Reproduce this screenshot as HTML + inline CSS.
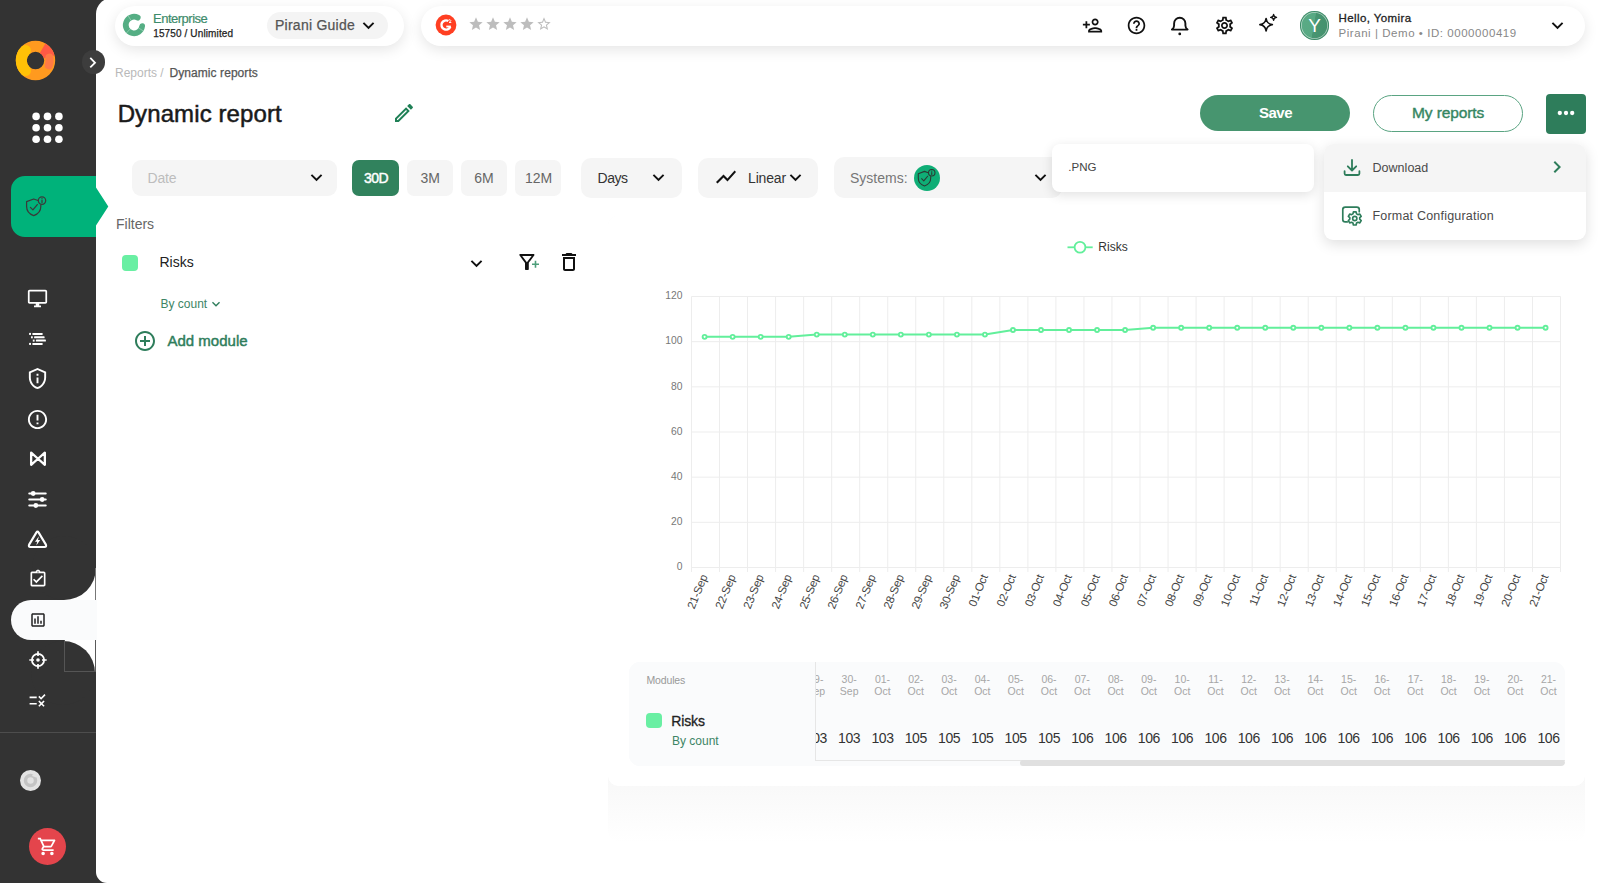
<!DOCTYPE html>
<html lang="en">
<head>
<meta charset="utf-8">
<title>Dynamic report</title>
<style>
*{box-sizing:border-box;margin:0;padding:0}
html,body{width:1600px;height:883px;overflow:hidden;background:#333;font-family:"Liberation Sans",sans-serif;color:#222}
.abs,.t{position:absolute}
.t{white-space:nowrap;line-height:1}
svg{position:absolute;display:block;overflow:visible}
#side{position:absolute;left:0;top:0;width:96px;height:883px;background:#333}
#main{position:absolute;left:96px;top:-2px;width:1504px;height:885px;background:#fff;border-radius:16px 0 0 11px}
.pill{position:absolute;background:#fff;border-radius:20px;box-shadow:0 4px 14px rgba(0,0,0,.10)}
.sel{position:absolute;background:#f5f5f5;border-radius:10px}
.btn{position:absolute;background:#f5f5f5;border-radius:7px}
</style>
</head>
<body>
<!-- SIDEBAR -->
<div id="side"></div>
<!-- MAIN -->
<div id="main"></div>
<!--SIDEBAR-CONTENT-->
<!-- sidebar content -->
<svg style="left:15px;top:40px" width="41" height="41" viewBox="-20.5 -20.5 41 41">
  <circle r="14.2" fill="none" stroke="#ff9a1f" stroke-width="11"/>
  <path d="M-10.0 -10.1 A14.2 14.2 0 0 0 -10.0 10.1" fill="none" stroke="#ffc107" stroke-width="11" stroke-linecap="round"/>
  <path d="M7.100 -12.300A14.200 14.200 0 0 1 13.720 -3.680" fill="none" stroke="#ff5a45" stroke-width="11"/>
  <path d="M13.900 -2.900A14.200 14.200 0 0 1 13.340 4.860" fill="none" stroke="#ff7a45" stroke-width="8" stroke-linecap="round"/>
</svg>
<div class="abs" style="left:81.500px;top:50.300px;width:23.800px;height:23.800px;border-radius:12px;background:#3d3d3d"></div>
<svg style="left:82.200px;top:51.700px" width="21.400" height="21.400" viewBox="0 0 24 24"><path fill="#fff" d="M10 6L8.59 7.41 13.17 12l-4.58 4.59L10 18l6-6z"/></svg>
<svg style="left:30px;top:110px" width="36" height="36" viewBox="0 0 36 36" fill="#fff">
  <circle cx="6.1" cy="6.4" r="3.8"/><circle cx="17.5" cy="6.4" r="3.8"/><circle cx="28.9" cy="6.4" r="3.8"/>
  <circle cx="6.1" cy="17.8" r="3.8"/><circle cx="17.5" cy="17.8" r="3.8"/><circle cx="28.9" cy="17.8" r="3.8"/>
  <circle cx="6.1" cy="29.2" r="3.8"/><circle cx="17.5" cy="29.2" r="3.8"/><circle cx="28.9" cy="29.2" r="3.8"/>
</svg>
<!-- green system tab -->
<svg style="left:11px;top:176px" width="98" height="61" viewBox="0 0 98 61"><path fill="#00b27a" d="M14 0H85V11.5L97.3 30.5 85 49.5V61H14A14 14 0 0 1 0 47V14A14 14 0 0 1 14 0Z"/></svg>
<svg style="left:24px;top:194px" width="24" height="24" viewBox="0 0 24 24" fill="none" stroke="#3a3a3a" stroke-width="1.25" stroke-linecap="round" stroke-linejoin="round">
  <path d="M14 6.5 9.7 5 2.6 7.6V12.6C2.6 17 5.6 20.3 9.7 21.7 13.8 20.3 16.8 17 16.8 12.6V11"/>
  <path d="M6.4 13.4 8.9 15.9 13.3 10.6"/>
  <circle cx="18" cy="6.6" r="3.7"/>
  <path d="M18 6.3V8.6M18 4.7V4.8"/>
</svg>
<!-- active tab -->
<div class="abs" style="left:64px;top:568px;width:32px;height:32px;background:#fff"></div>
<div class="abs" style="left:32px;top:536px;width:64px;height:64px;border-radius:32px;background:#333"></div>
<div class="abs" style="left:95px;top:568px;width:1px;height:32px;background:#777"></div>
<div class="abs" style="left:64px;top:640px;width:32px;height:32px;background:#fff;border:1px solid #5a5a5a;border-top:0"></div>
<div class="abs" style="left:31px;top:641px;width:64px;height:64px;border-radius:32px;background:#333"></div>
<div class="abs" style="left:64px;top:640px;width:1px;height:32px;background:#555"></div>
<div class="abs" style="left:64px;top:671px;width:32px;height:1px;background:#555"></div>
<div class="abs" style="left:11px;top:600px;width:86px;height:40px;border-radius:20px 0 0 20px;background:#fafbfc"></div>
<!-- nav icons -->
<svg style="left:27px;top:288px" width="21" height="21" viewBox="0 0 24 24"><path fill="#fff" d="M21 2H3c-1.1 0-2 .9-2 2v12c0 1.1.9 2 2 2h7v2H8v2h8v-2h-2v-2h7c1.100 0 2-.9 2-2V4c0-1.100-.9-2-2-2zm0 14H3V4h18v12z"/></svg>
<svg style="left:28px;top:331px" width="20" height="16" viewBox="0 0 20 16" fill="#fff"><rect x="1.100" y="1.900" width="1.900" height="2"/><rect x="4.300" y="1.900" width="10.400" height="2" rx=".6"/><rect x="3" y="5.300" width="1.800" height="2"/><rect x="6.100" y="5.300" width="10.500" height="2" rx=".6"/><rect x="4.800" y="8.600" width="1.800" height="2"/><rect x="7.900" y="8.600" width="10" height="2" rx=".6"/><rect x="1.100" y="11.900" width="1.900" height="2"/><rect x="4.300" y="11.900" width="10.400" height="2" rx=".6"/></svg>
<svg style="left:26px;top:366.500px" width="23" height="23" viewBox="0 0 24 24"><path fill="#fff" d="M12 3.190l7 3.110V11c0 4.520-2.980 8.690-7 9.930-4.020-1.240-7-5.410-7-9.930V6.300l7-3.110M12 1L3 5v6c0 5.550 3.840 10.740 9 12 5.160-1.260 9-6.450 9-12V5l-9-4zm-1 6h2v2h-2V7zm0 4h2v6h-2v-6z"/></svg>
<svg style="left:26px;top:407.500px" width="23" height="23" viewBox="0 0 24 24"><path fill="#fff" d="M11 15h2v2h-2zm0-8h2v6h-2zm.99-5C6.470 2 2 6.480 2 12s4.470 10 9.990 10C17.520 22 22 17.520 22 12S17.520 2 11.990 2zM12 20c-4.420 0-8-3.580-8-8s3.580-8 8-8 8 3.580 8 8-3.580 8-8 8z"/></svg>
<svg style="left:28.500px;top:450px" width="18" height="17.500" viewBox="0 0 21 21" preserveAspectRatio="none"><path fill="none" stroke="#fff" stroke-width="2.700" stroke-linejoin="round" d="M2.500 3.200 10.500 10.500 18.500 3.200V17.800L10.500 10.500 2.500 17.800Z"/></svg>
<svg style="left:27px;top:489px" width="21" height="21" viewBox="0 0 21 21" fill="none" stroke="#fff" stroke-width="2.100" stroke-linecap="round"><path d="M2.300 4.500H18.700M2.300 10.500H18.700M2.300 16.500H18.700"/><circle cx="6.200" cy="4.500" r="2.400" fill="#fff" stroke="none"/><circle cx="15.200" cy="10.500" r="2.400" fill="#fff" stroke="none"/><circle cx="8.800" cy="16.500" r="2.400" fill="#fff" stroke="none"/></svg>
<svg style="left:27px;top:529px" width="21" height="21" viewBox="0 0 21 21"><path fill="none" stroke="#fff" stroke-width="2.100" stroke-linejoin="round" d="M9.300 3.600Q10.500 1.700 11.700 3.600L18.900 15.600Q19.800 17.900 17.500 18H3.500Q1.200 17.900 2.100 15.600Z"/><path fill="#fff" d="M11.900 7.200 8 12.800H10.200L9.300 16.600 13.200 10.900H11Z"/></svg>
<svg style="left:27.500px;top:569px" width="20" height="20" viewBox="0 0 24 24"><path fill="#fff" d="M18 9l-1.400-1.400-6.600 6.600-2.600-2.600L6 13l4 4zm1-6h-4.180C14.400 1.840 13.300 1 12 1c-1.300 0-2.400.840-2.820 2H5c-.14 0-.27.010-.4.040-.39.080-.74.280-1.010.55-.18.180-.33.400-.43.640-.1.230-.16.490-.16.770v14c0 .27.060.54.160.78s.25.450.43.640c.27.270.62.470 1.010.55.130.020.260.030.400.030h14c1.100 0 2-.9 2-2V5c0-1.100-.9-2-2-2zm-7-.25c.41 0 .75.340.75.750s-.34.750-.75.750-.75-.34-.75-.75.340-.75.750-.750zM19 19H5V5h14v14z"/></svg>
<svg style="left:28.650px;top:610.950px" width="18" height="18" viewBox="0 0 24 24"><path fill="#222" d="M19 3H5c-1.100 0-2 .9-2 2v14c0 1.100.9 2 2 2h14c1.100 0 2-.9 2-2V5c0-1.100-.9-2-2-2zm0 16H5V5h14v14zM7 10h2v7H7zm4-3h2v10h-2zm4 6h2v4h-2z"/></svg>
<svg style="left:28.200px;top:649.600px" width="20" height="20" viewBox="-10 -10 20 20" fill="none" stroke="#fff" stroke-width="1.800"><circle r="6.100"/><path d="M0 -8.700V-4M0 8.700V4M-8.700 0H-4M8.700 0H4" stroke-width="1.700"/><circle r="1.800" fill="#fff" stroke="none"/></svg>
<svg style="left:28.400px;top:690.600px" width="19" height="19" viewBox="0 0 24 24"><path fill="#fff" d="M16.540 11L13 7.460l1.410-1.410 2.120 2.120 4.240-4.240 1.410 1.410L16.540 11zM11 7H2v2h9V7zm10 6.410L19.590 12 17 14.590 14.410 12 13 13.410 15.590 16 13 18.590 14.410 20 17 17.410 19.590 20 21 18.590 18.410 16 21 13.410zM11 15H2v2h9v-2z"/></svg>
<div class="abs" style="left:0;top:732px;width:96px;height:1px;background:#4d4d4d"></div>
<div class="abs" style="left:20px;top:770px;width:21px;height:21px;border-radius:11px;background:#e3e3e3"></div>
<svg style="left:20px;top:770px" width="21" height="21" viewBox="-10.500 -10.500 21 21"><circle r="5" fill="none" stroke="#c4c4c4" stroke-width="3.500"/><path d="M2-5.500 6-4" stroke="#e3e3e3" stroke-width="2"/></svg>
<div class="abs" style="left:29px;top:828px;width:37px;height:37px;border-radius:19px;background:#e4454c"></div>
<svg style="left:37px;top:836px" width="21" height="21" viewBox="0 0 24 24"><path fill="#fff" d="M15.550 13c.75 0 1.410-.41 1.750-1.030l3.580-6.490c.37-.66-.11-1.480-.87-1.480H5.210l-.94-2H1v2h2l3.600 7.590-1.350 2.440C4.520 15.370 5.480 17 7 17h12v-2H7l1.100-2h7.450zM6.160 6h12.150l-2.760 5H8.530L6.160 6zM7 18c-1.100 0-1.990.9-1.990 2S5.900 22 7 22s2-.9 2-2-.9-2-2-2zm10 0c-1.100 0-1.990.9-1.990 2s.89 2 1.990 2 2-.9 2-2-.9-2-2-2z"/></svg>
<!--/SIDEBAR-CONTENT-->
<!--TOPBAR-->
<!-- top bar -->
<div class="pill" style="left:115px;top:5.500px;width:289px;height:40px"></div>
<svg style="left:122.900px;top:14.200px" width="22" height="22" viewBox="-11 -11 22 22" fill="none" stroke="#55ae84" stroke-width="5.700" stroke-linecap="round">
  <path d="M3.750 -7.350A8.250 8.250 0 1 0 8.190 1"/>
  <path d="M-3 -4.700-6 -9.400M-3.800 4-7.800 8.200M4.700 3 9.400 6" stroke="#bfe3d2" stroke-width=".5" stroke-linecap="butt"/>
</svg>
<div class="t" id="t_ent" style="left:153px;top:12.200px;font-size:13px;color:#3d8b6b;-webkit-text-stroke:.2px #3d8b6b;letter-spacing:-.5px">Enterprise</div>
<div class="t" id="t_unl" style="left:153.200px;top:28.700px;font-size:10px;color:#222;-webkit-text-stroke:.25px #222;letter-spacing:.13px">15750 / Unlimited</div>
<div class="abs" style="left:267px;top:12.300px;width:121px;height:26.400px;border-radius:14px;background:#f4f4f4"></div>
<div class="t" id="t_pg" style="left:275px;top:18px;font-size:14px;color:#555;letter-spacing:.25px;-webkit-text-stroke:.25px #555">Pirani Guide</div>
<svg style="left:356.800px;top:14.200px" width="23" height="23" viewBox="0 0 24 24"><path fill="#111" d="M16.590 8.590L12 13.170 7.410 8.590 6 10l6 6 6-6z"/></svg>
<div class="pill" style="left:420.700px;top:5.500px;width:1164.600px;height:40px"></div>
<svg style="left:434.500px;top:14.200px" width="22" height="22" viewBox="-11 -11 22 22"><circle r="10.400" fill="#ff3f22"/><path d="M2.300 -4A4.600 4.600 0 1 0 4.300 1.700" fill="none" stroke="#fff" stroke-width="2.400"/><path d="M0.300 1.500H4.900" stroke="#fff" stroke-width="1.800"/><path d="M2.600 -4.900Q4.400 -6 4.800 -4.600 4.800 -3.400 3 -2.500H5.300" fill="none" stroke="#fff" stroke-width=".9"/></svg>
<svg style="left:467.500px;top:16.300px" width="16" height="16" viewBox="0 0 24 24"><path fill="#bdbdbd" d="M12 17.270L18.180 21l-1.640-7.030L22 9.240l-7.190-.61L12 2 9.190 8.630 2 9.240l5.460 4.730L5.820 21z"/></svg>
<svg style="left:484.550px;top:16.300px" width="16" height="16" viewBox="0 0 24 24"><path fill="#bdbdbd" d="M12 17.270L18.180 21l-1.640-7.030L22 9.240l-7.190-.61L12 2 9.190 8.630 2 9.240l5.460 4.730L5.820 21z"/></svg>
<svg style="left:501.600px;top:16.300px" width="16" height="16" viewBox="0 0 24 24"><path fill="#bdbdbd" d="M12 17.270L18.180 21l-1.640-7.030L22 9.240l-7.190-.61L12 2 9.190 8.630 2 9.240l5.460 4.730L5.820 21z"/></svg>
<svg style="left:518.650px;top:16.300px" width="16" height="16" viewBox="0 0 24 24"><path fill="#bdbdbd" d="M12 17.270L18.180 21l-1.640-7.030L22 9.240l-7.190-.61L12 2 9.190 8.630 2 9.240l5.460 4.730L5.820 21z"/></svg>
<svg style="left:535.700px;top:16.300px" width="16" height="16" viewBox="0 0 24 24"><path fill="#bdbdbd" d="M22 9.240l-7.190-.62L12 2 9.190 8.630 2 9.240l5.460 4.730L5.820 21 12 17.270 18.180 21l-1.630-7.030L22 9.240zM12 15.400l-3.760 2.270 1-4.280-3.320-2.880 4.380-.38L12 6.100l1.710 4.040 4.380.38-3.320 2.880 1 4.280L12 15.400z"/></svg>
<!-- right icons -->
<svg style="left:1082px;top:15px" width="21" height="21" viewBox="0 0 24 24"><path fill="#111" d="M15 12c2.210 0 4-1.790 4-4s-1.790-4-4-4-4 1.790-4 4 1.790 4 4 4zm0-6c1.100 0 2 .9 2 2s-.9 2-2 2-2-.9-2-2 .9-2 2-2zm0 8c-2.670 0-8 1.340-8 4v2h16v-2c0-2.660-5.330-4-8-4zm-6 4c.22-.72 3.310-2 6-2 2.700 0 5.800 1.290 6 2H9zm-3-3v-3h3v-2H6V7H4v3H1v2h3v3z"/></svg>
<svg style="left:1125.600px;top:14.600px" width="21" height="21" viewBox="0 0 24 24"><path fill="#111" d="M11 18h2v-2h-2v2zm1-16C6.480 2 2 6.480 2 12s4.480 10 10 10 10-4.480 10-10S17.520 2 12 2zm0 18c-4.410 0-8-3.590-8-8s3.590-8 8-8 8 3.590 8 8-3.590 8-8 8zm0-14c-2.210 0-4 1.790-4 4h2c0-1.100.9-2 2-2s2 .9 2 2c0 2-3 1.750-3 5h2c0-2.250 3-2.500 3-5 0-2.210-1.790-4-4-4z"/></svg>
<svg style="left:1169px;top:15px" width="22" height="22" viewBox="0 0 22 22" fill="none" stroke="#111" stroke-width="1.900" stroke-linejoin="round"><path d="M2.900 14.600Q5.100 13.200 5.100 10.500V8.600A5.650 5.900 0 0 1 16.400 8.600V10.500Q16.400 13.200 18.600 14.600Z"/><circle cx="10.750" cy="18.900" r="1.400" fill="#111" stroke="none"/></svg>
<svg style="left:1214px;top:15px" width="21" height="21" viewBox="0 0 24 24"><path fill="#111" d="M19.430 12.980c.040-.32.070-.64.070-.98 0-.34-.030-.66-.070-.98l2.110-1.650c.19-.15.240-.42.120-.64l-2-3.460c-.09-.16-.26-.25-.44-.25-.06 0-.12.010-.17.030l-2.490 1c-.52-.4-1.080-.73-1.690-.98l-.38-2.650C14.460 2.180 14.250 2 14 2h-4c-.25 0-.46.180-.49.420l-.38 2.650c-.61.250-1.170.59-1.690.98l-2.490-1c-.06-.02-.12-.03-.18-.03-.17 0-.34.090-.43.250l-2 3.460c-.13.220-.07.490.12.640l2.110 1.650c-.04.320-.07.650-.07.980 0 .33.030.66.070.98l-2.110 1.650c-.19.150-.24.420-.12.640l2 3.460c.09.160.26.250.44.250.06 0 .12-.01.170-.03l2.490-1c.52.400 1.080.73 1.690.98l.38 2.650c.03.240.24.420.49.420h4c.25 0 .46-.18.490-.42l.38-2.650c.61-.25 1.170-.59 1.690-.98l2.490 1c.06.020.12.030.18.030.17 0 .34-.09.430-.25l2-3.460c.12-.22.070-.49-.12-.64l-2.110-1.650zm-1.980-1.710c.04.310.05.520.05.730 0 .21-.02.430-.05.730l-.14 1.130.89.700 1.080.84-.7 1.210-1.270-.51-1.040-.42-.9.680c-.43.320-.84.560-1.250.73l-1.060.43-.16 1.130-.2 1.350h-1.400l-.19-1.350-.16-1.130-1.060-.43c-.43-.18-.83-.41-1.230-.71l-.91-.7-1.060.43-1.270.51-.7-1.210 1.080-.84.890-.7-.14-1.130c-.03-.31-.05-.54-.05-.74s.02-.43.050-.73l.14-1.130-.89-.7-1.080-.84.700-1.210 1.270.51 1.040.42.900-.68c.43-.32.840-.56 1.250-.73l1.060-.43.160-1.130.2-1.350h1.390l.19 1.350.16 1.130 1.060.43c.43.180.83.410 1.230.71l.91.700 1.060-.43 1.270-.51.700 1.210-1.070.85-.89.700.14 1.130zM12 8c-2.210 0-4 1.790-4 4s1.790 4 4 4 4-1.790 4-4-1.790-4-4-4zm0 6c-1.100 0-2-.9-2-2s.9-2 2-2 2 .9 2 2-.9 2-2 2z"/></svg>
<svg style="left:1257px;top:12px" width="22" height="22" viewBox="0 0 22 22" fill="none" stroke="#111" stroke-width="1.700" stroke-linejoin="round"><path d="M9.100 6.500Q9.900 11.900 15.300 12.700 9.900 13.500 9.100 18.900 8.300 13.500 2.900 12.700 8.300 11.900 9.100 6.500Z"/><path d="M16.600 2.350Q16.900 5.050 19.600 5.350 16.900 5.650 16.600 8.350 16.300 5.650 13.600 5.350 16.300 5.050 16.600 2.350Z" stroke-width="1.200"/></svg>
<div class="abs" style="left:1300px;top:11px;width:29px;height:29px;border-radius:15px;background:linear-gradient(100deg,#5aab86 0%,#58a983 47%,#489571 49%,#43906c 100%);box-shadow:inset 0 0 0 1px #3d8b68, inset 0 0 0 1.800px rgba(255,255,255,.55)"></div>
<div class="t" id="t_y" style="left:1307px;top:15.800px;font-size:19px;color:#fff;width:15px;text-align:center">Y</div>
<div class="t" id="t_hello" style="left:1338.500px;top:13px;font-size:11.500px;color:#222;-webkit-text-stroke:.3px #222;letter-spacing:.4px">Hello, Yomira</div>
<div class="t" id="t_demo" style="left:1338.500px;top:28px;font-size:11.500px;color:#888;letter-spacing:.55px">Pirani | Demo • ID: 0000000419</div>
<svg style="left:1546.300px;top:14.100px" width="23" height="23" viewBox="0 0 24 24"><path fill="#111" d="M16.590 8.590L12 13.170 7.410 8.590 6 10l6 6 6-6z"/></svg>
<!-- breadcrumb + title -->
<div class="t" id="t_bc1" style="left:115px;top:66.750px;font-size:12px;color:#b9b9b9">Reports /</div>
<div class="t" id="t_bc2" style="left:169.500px;top:66.750px;font-size:12px;color:#555;-webkit-text-stroke:.25px #555;letter-spacing:.07px">Dynamic reports</div>
<div class="t" id="t_title" style="left:117.700px;top:101.750px;font-size:24px;color:#1a1a1a;-webkit-text-stroke:.5px #1a1a1a;letter-spacing:.1px">Dynamic report</div>
<svg style="left:392.200px;top:101.400px" width="24" height="24" viewBox="0 0 24 24"><path fill="#1f8056" d="M14.060 9.020l.92.920L5.920 19H5v-.92l9.060-9.060M17.660 3c-.25 0-.51.100-.7.290l-1.830 1.830 3.750 3.750 1.830-1.830c.39-.39.390-1.020 0-1.410l-2.340-2.340c-.2-.2-.45-.29-.71-.29zm-3.600 3.190L3 17.250V21h3.750L17.810 9.940l-3.750-3.750z"/></svg>
<!-- buttons -->
<div class="abs" style="left:1200px;top:95.200px;width:150.200px;height:36.300px;border-radius:18.200px;background:#47956f"></div>
<div class="t" id="t_save" style="left:1259px;top:105px;font-size:15px;color:#fff;font-weight:bold;letter-spacing:-.5px">Save</div>
<div class="abs" style="left:1372.500px;top:95px;width:150.500px;height:37px;border-radius:19px;border:1px solid #5aa482;background:#fff"></div>
<div class="t" id="t_myr" style="left:1412px;top:105px;font-size:15.500px;color:#368662;-webkit-text-stroke:.4px #368662;letter-spacing:-.1px">My reports</div>
<div class="abs" style="left:1545.500px;top:93.500px;width:40px;height:40px;border-radius:4px;background:#2e7d5b"></div>
<svg style="left:1556px;top:108px" width="20" height="10" viewBox="0 0 20 10" fill="#fff"><circle cx="3.800" cy="5" r="2.150"/><circle cx="10" cy="5" r="2.150"/><circle cx="16.200" cy="5" r="2.150"/></svg>
<!-- filter row -->
<div class="sel" style="left:132px;top:160px;width:205px;height:36px;border-radius:9px"></div>
<div class="t" id="t_date" style="left:147.500px;top:170.500px;font-size:14px;color:#bdbdbd;letter-spacing:-.2px">Date</div>
<svg style="left:305.000px;top:165.800px" width="23" height="23" viewBox="0 0 24 24"><path fill="#111" d="M16.590 8.590L12 13.170 7.410 8.590 6 10l6 6 6-6z"/></svg>
<div class="btn" style="left:352.300px;top:160px;width:46.400px;height:36px;background:#31825d"></div>
<div class="t" id="t_30d" style="left:363.900px;top:171px;font-size:14px;color:#fff;-webkit-text-stroke:.45px #fff;letter-spacing:-.45px">30D</div>
<div class="btn" style="left:407px;top:160px;width:45.800px;height:36px"></div>
<div class="t" id="t_3m" style="left:420.500px;top:171px;font-size:14px;color:#666">3M</div>
<div class="btn" style="left:461.100px;top:160px;width:46px;height:36px"></div>
<div class="t" id="t_6m" style="left:474.250px;top:171px;font-size:14px;color:#666">6M</div>
<div class="btn" style="left:515px;top:160px;width:46.300px;height:36px"></div>
<div class="t" id="t_12m" style="left:525px;top:171px;font-size:14px;color:#666">12M</div>
<div class="sel" style="left:581px;top:157.800px;width:101px;height:40.600px"></div>
<div class="t" id="t_days" style="left:597.500px;top:170.500px;font-size:14px;color:#333;letter-spacing:-.45px">Days</div>
<svg style="left:647.250px;top:166.300px" width="23" height="23" viewBox="0 0 24 24"><path fill="#111" d="M16.590 8.590L12 13.170 7.410 8.590 6 10l6 6 6-6z"/></svg>
<div class="sel" style="left:697.500px;top:157.800px;width:120.500px;height:40.600px"></div>
<svg style="left:714px;top:165px" width="24" height="24" viewBox="0 0 24 24"><path fill="#111" d="M3.500 18.490l6-6.010 4 4L22 6.920l-1.410-1.410-7.090 7.970-4-4L2 16.990z"/></svg>
<div class="t" id="t_lin" style="left:748px;top:170.500px;font-size:14px;color:#333;letter-spacing:-.15px">Linear</div>
<svg style="left:784.100px;top:166.300px" width="23" height="23" viewBox="0 0 24 24"><path fill="#111" d="M16.590 8.590L12 13.170 7.410 8.590 6 10l6 6 6-6z"/></svg>
<div class="sel" style="left:834.200px;top:157.100px;width:228.300px;height:40.800px"></div>
<div class="t" id="t_sys" style="left:850px;top:170.500px;font-size:14px;color:#777;letter-spacing:0px">Systems:</div>
<div class="abs" style="left:914px;top:164.500px;width:26px;height:26px;border-radius:13px;background:#0fae76"></div>
<svg style="left:916px;top:167px" width="21" height="21" viewBox="0 0 24 24" fill="none" stroke="#2b3a33" stroke-width="1.250" stroke-linecap="round" stroke-linejoin="round">
  <path d="M14 6.500 9.700 5 2.600 7.600V12.600C2.600 17 5.600 20.300 9.700 21.700 13.800 20.300 16.800 17 16.800 12.600V11"/>
  <path d="M6.400 13.400 8.900 15.900 13.300 10.600"/>
  <circle cx="18" cy="6.600" r="3.700"/>
  <path d="M18 6.300V8.600M18 4.700V4.800"/>
</svg>
<svg style="left:1029.100px;top:166.300px" width="23" height="23" viewBox="0 0 24 24"><path fill="#111" d="M16.590 8.590L12 13.170 7.410 8.590 6 10l6 6 6-6z"/></svg>

<!--HEADER-->
<!--FILTERS-->
<!-- filters -->
<div class="t" id="t_filters" style="left:116px;top:217.100px;font-size:14px;color:#666">Filters</div>
<div class="abs" style="left:122.300px;top:255.300px;width:15.800px;height:15.800px;border-radius:4px;background:#69efa3"></div>
<div class="t" id="t_risks" style="left:159.500px;top:255.100px;font-size:14px;color:#222">Risks</div>
<svg style="left:465.000px;top:251.700px" width="23" height="23" viewBox="0 0 24 24"><path fill="#111" d="M16.590 8.590L12 13.170 7.410 8.590 6 10l6 6 6-6z"/></svg>
<svg style="left:516px;top:250px" width="24" height="24" viewBox="0 0 24 24"><path fill="#111" d="M7 6h10l-5.010 6.300L7 6zm-2.750-.39C6.270 8.200 10 13 10 13v6c0 .55.450 1 1 1h2c.55 0 1-.45 1-1v-6s3.720-4.800 5.740-7.390c.51-.66.040-1.610-.79-1.610H5.040c-.83 0-1.300.95-.79 1.610z" transform="translate(-.500 0) scale(.95 1)"/><path fill="#4d9e7a" transform="translate(.500 -.700)" d="M18.200 11.500h1.600v2.700h2.700v1.600h-2.700v2.700h-1.600v-2.700h-2.700v-1.600h2.700z"/></svg>
<svg style="left:557px;top:250px" width="24" height="24" viewBox="0 0 24 24"><path fill="#111" d="M6 19c0 1.100.9 2 2 2h8c1.100 0 2-.9 2-2V7H6v12zM8 9h8v10H8V9zm7.500-5l-1-1h-5l-1 1H5v2h14V4z"/></svg>
<div class="t" id="t_bycount" style="left:160.500px;top:298px;font-size:12px;color:#3d8565">By count</div>
<svg style="left:208px;top:296px" width="16" height="16" viewBox="0 0 24 24"><path fill="#2e7d5b" d="M16.590 8.590L12 13.170 7.410 8.590 6 10l6 6 6-6z"/></svg>
<svg style="left:133px;top:329.250px" width="24" height="24" viewBox="0 0 24 24"><path fill="#2e7d5b" d="M13 7h-2v4H7v2h4v4h2v-4h4v-2h-4V7zm-1-5C6.480 2 2 6.480 2 12s4.480 10 10 10 10-4.480 10-10S17.520 2 12 2zm0 18c-4.410 0-8-3.590-8-8s3.590-8 8-8 8 3.590 8 8-3.590 8-8 8z"/></svg>
<div class="t" id="t_addm" style="left:167.500px;top:333.400px;font-size:15px;color:#2e7d5b;-webkit-text-stroke:.45px #2e7d5b">Add module</div>

<!--CHART-->
<!-- chart card -->
<div class="abs" style="left:608px;top:776px;width:977px;height:66px;border-radius:0 0 12px 12px;background:linear-gradient(to bottom,#f8f8f8 0,#f9f9f9 18%,#fcfcfc 60%,#fff 100%)"></div>
<div class="abs" style="left:608px;top:216px;width:977px;height:570px;border-radius:10px;background:#fff;box-shadow:0 0 2px rgba(0,0,0,.012)"></div>
<svg style="left:608px;top:216px" width="977" height="440" viewBox="608 216 977 440" font-family="Liberation Sans, sans-serif">
<path d="M691.50 296.5V572.0M719.53 296.5V572.0M747.56 296.5V572.0M775.60 296.5V572.0M803.63 296.5V572.0M831.66 296.5V572.0M859.69 296.5V572.0M887.73 296.5V572.0M915.76 296.5V572.0M943.79 296.5V572.0M971.82 296.5V572.0M999.85 296.5V572.0M1027.89 296.5V572.0M1055.92 296.5V572.0M1083.95 296.5V572.0M1111.98 296.5V572.0M1140.02 296.5V572.0M1168.05 296.5V572.0M1196.08 296.5V572.0M1224.11 296.5V572.0M1252.15 296.5V572.0M1280.18 296.5V572.0M1308.21 296.5V572.0M1336.24 296.5V572.0M1364.27 296.5V572.0M1392.31 296.5V572.0M1420.34 296.5V572.0M1448.37 296.5V572.0M1476.40 296.5V572.0M1504.44 296.5V572.0M1532.47 296.5V572.0M1560.50 296.5V572.0M691.5 567.50H1560.5M691.5 522.33H1560.5M691.5 477.17H1560.5M691.5 432.00H1560.5M691.5 386.83H1560.5M691.5 341.67H1560.5M691.5 296.50H1560.5" fill="none" stroke="#ededed" stroke-width="1"/>
<g font-size="10.300" fill="#777" text-anchor="end">
<text x="682.500" y="570.20">0</text>
<text x="682.500" y="525.03">20</text>
<text x="682.500" y="479.87">40</text>
<text x="682.500" y="434.70">60</text>
<text x="682.500" y="389.53">80</text>
<text x="682.500" y="344.37">100</text>
<text x="682.500" y="299.20">120</text>
</g>
<g font-size="11.500" fill="#444" text-anchor="end" letter-spacing="-.2">
<text x="704.02" y="575" dy=".35em" transform="rotate(-68 704.02 575)">21-Sep</text>
<text x="732.05" y="575" dy=".35em" transform="rotate(-68 732.05 575)">22-Sep</text>
<text x="760.08" y="575" dy=".35em" transform="rotate(-68 760.08 575)">23-Sep</text>
<text x="788.11" y="575" dy=".35em" transform="rotate(-68 788.11 575)">24-Sep</text>
<text x="816.15" y="575" dy=".35em" transform="rotate(-68 816.15 575)">25-Sep</text>
<text x="844.18" y="575" dy=".35em" transform="rotate(-68 844.18 575)">26-Sep</text>
<text x="872.21" y="575" dy=".35em" transform="rotate(-68 872.21 575)">27-Sep</text>
<text x="900.24" y="575" dy=".35em" transform="rotate(-68 900.24 575)">28-Sep</text>
<text x="928.27" y="575" dy=".35em" transform="rotate(-68 928.27 575)">29-Sep</text>
<text x="956.31" y="575" dy=".35em" transform="rotate(-68 956.31 575)">30-Sep</text>
<text x="984.34" y="575" dy=".35em" transform="rotate(-68 984.34 575)">01-Oct</text>
<text x="1012.37" y="575" dy=".35em" transform="rotate(-68 1012.37 575)">02-Oct</text>
<text x="1040.40" y="575" dy=".35em" transform="rotate(-68 1040.40 575)">03-Oct</text>
<text x="1068.44" y="575" dy=".35em" transform="rotate(-68 1068.44 575)">04-Oct</text>
<text x="1096.47" y="575" dy=".35em" transform="rotate(-68 1096.47 575)">05-Oct</text>
<text x="1124.50" y="575" dy=".35em" transform="rotate(-68 1124.50 575)">06-Oct</text>
<text x="1152.53" y="575" dy=".35em" transform="rotate(-68 1152.53 575)">07-Oct</text>
<text x="1180.56" y="575" dy=".35em" transform="rotate(-68 1180.56 575)">08-Oct</text>
<text x="1208.60" y="575" dy=".35em" transform="rotate(-68 1208.60 575)">09-Oct</text>
<text x="1236.63" y="575" dy=".35em" transform="rotate(-68 1236.63 575)">10-Oct</text>
<text x="1264.66" y="575" dy=".35em" transform="rotate(-68 1264.66 575)">11-Oct</text>
<text x="1292.69" y="575" dy=".35em" transform="rotate(-68 1292.69 575)">12-Oct</text>
<text x="1320.73" y="575" dy=".35em" transform="rotate(-68 1320.73 575)">13-Oct</text>
<text x="1348.76" y="575" dy=".35em" transform="rotate(-68 1348.76 575)">14-Oct</text>
<text x="1376.79" y="575" dy=".35em" transform="rotate(-68 1376.79 575)">15-Oct</text>
<text x="1404.82" y="575" dy=".35em" transform="rotate(-68 1404.82 575)">16-Oct</text>
<text x="1432.85" y="575" dy=".35em" transform="rotate(-68 1432.85 575)">17-Oct</text>
<text x="1460.89" y="575" dy=".35em" transform="rotate(-68 1460.89 575)">18-Oct</text>
<text x="1488.92" y="575" dy=".35em" transform="rotate(-68 1488.92 575)">19-Oct</text>
<text x="1516.95" y="575" dy=".35em" transform="rotate(-68 1516.95 575)">20-Oct</text>
<text x="1544.98" y="575" dy=".35em" transform="rotate(-68 1544.98 575)">21-Oct</text>
</g>
<polyline fill="none" stroke="#62ef9b" stroke-width="2" stroke-linejoin="round" points="704.62,336.85 732.65,336.85 760.68,336.85 788.71,336.85 816.75,334.59 844.78,334.59 872.81,334.59 900.84,334.59 928.87,334.59 956.91,334.59 984.94,334.59 1012.97,330.07 1041.00,330.07 1069.04,330.07 1097.07,330.07 1125.10,330.07 1153.13,327.82 1181.16,327.82 1209.20,327.82 1237.23,327.82 1265.26,327.82 1293.29,327.82 1321.33,327.82 1349.36,327.82 1377.39,327.82 1405.42,327.82 1433.45,327.82 1461.49,327.82 1489.52,327.82 1517.55,327.82 1545.58,327.82"/>
<g fill="#fff" stroke="#62ef9b" stroke-width="1.900">
<circle cx="704.62" cy="336.85" r="2"/>
<circle cx="732.65" cy="336.85" r="2"/>
<circle cx="760.68" cy="336.85" r="2"/>
<circle cx="788.71" cy="336.85" r="2"/>
<circle cx="816.75" cy="334.59" r="2"/>
<circle cx="844.78" cy="334.59" r="2"/>
<circle cx="872.81" cy="334.59" r="2"/>
<circle cx="900.84" cy="334.59" r="2"/>
<circle cx="928.87" cy="334.59" r="2"/>
<circle cx="956.91" cy="334.59" r="2"/>
<circle cx="984.94" cy="334.59" r="2"/>
<circle cx="1012.97" cy="330.07" r="2"/>
<circle cx="1041.00" cy="330.07" r="2"/>
<circle cx="1069.04" cy="330.07" r="2"/>
<circle cx="1097.07" cy="330.07" r="2"/>
<circle cx="1125.10" cy="330.07" r="2"/>
<circle cx="1153.13" cy="327.82" r="2"/>
<circle cx="1181.16" cy="327.82" r="2"/>
<circle cx="1209.20" cy="327.82" r="2"/>
<circle cx="1237.23" cy="327.82" r="2"/>
<circle cx="1265.26" cy="327.82" r="2"/>
<circle cx="1293.29" cy="327.82" r="2"/>
<circle cx="1321.33" cy="327.82" r="2"/>
<circle cx="1349.36" cy="327.82" r="2"/>
<circle cx="1377.39" cy="327.82" r="2"/>
<circle cx="1405.42" cy="327.82" r="2"/>
<circle cx="1433.45" cy="327.82" r="2"/>
<circle cx="1461.49" cy="327.82" r="2"/>
<circle cx="1489.52" cy="327.82" r="2"/>
<circle cx="1517.55" cy="327.82" r="2"/>
<circle cx="1545.58" cy="327.82" r="2"/>
</g>
<path d="M1067.500 247.300H1092.700" stroke="#62ef9b" stroke-width="1.800"/>
<circle cx="1080" cy="247.300" r="5.400" fill="#fff" stroke="#62ef9b" stroke-width="1.800"/>
<text x="1098.300" y="250.750" font-size="12" fill="#333">Risks</text>
</svg>
<!--/CHART-->
<!--TABLE-->
<!-- table -->
<div class="abs" style="left:628.700px;top:662px;width:936.300px;height:104px;border-radius:11px 11px 4px 11px;background:#fafbfc;overflow:hidden">
<div class="t col" style="left:170.55px;top:11.250px;width:33.300px;text-align:center;font-size:10.500px;line-height:12px;color:#a6a6a6;white-space:normal">29-<br>Sep</div>
<div class="t col" style="left:170.55px;top:68.750px;width:33.300px;text-align:center;font-size:14px;color:#333;letter-spacing:-.4px">103</div>
<div class="t col" style="left:203.85px;top:11.250px;width:33.300px;text-align:center;font-size:10.500px;line-height:12px;color:#a6a6a6;white-space:normal">30-<br>Sep</div>
<div class="t col" style="left:203.85px;top:68.750px;width:33.300px;text-align:center;font-size:14px;color:#333;letter-spacing:-.4px">103</div>
<div class="t col" style="left:237.15px;top:11.250px;width:33.300px;text-align:center;font-size:10.500px;line-height:12px;color:#a6a6a6;white-space:normal">01-<br>Oct</div>
<div class="t col" style="left:237.15px;top:68.750px;width:33.300px;text-align:center;font-size:14px;color:#333;letter-spacing:-.4px">103</div>
<div class="t col" style="left:270.45px;top:11.250px;width:33.300px;text-align:center;font-size:10.500px;line-height:12px;color:#a6a6a6;white-space:normal">02-<br>Oct</div>
<div class="t col" style="left:270.45px;top:68.750px;width:33.300px;text-align:center;font-size:14px;color:#333;letter-spacing:-.4px">105</div>
<div class="t col" style="left:303.75px;top:11.250px;width:33.300px;text-align:center;font-size:10.500px;line-height:12px;color:#a6a6a6;white-space:normal">03-<br>Oct</div>
<div class="t col" style="left:303.75px;top:68.750px;width:33.300px;text-align:center;font-size:14px;color:#333;letter-spacing:-.4px">105</div>
<div class="t col" style="left:337.05px;top:11.250px;width:33.300px;text-align:center;font-size:10.500px;line-height:12px;color:#a6a6a6;white-space:normal">04-<br>Oct</div>
<div class="t col" style="left:337.05px;top:68.750px;width:33.300px;text-align:center;font-size:14px;color:#333;letter-spacing:-.4px">105</div>
<div class="t col" style="left:370.35px;top:11.250px;width:33.300px;text-align:center;font-size:10.500px;line-height:12px;color:#a6a6a6;white-space:normal">05-<br>Oct</div>
<div class="t col" style="left:370.35px;top:68.750px;width:33.300px;text-align:center;font-size:14px;color:#333;letter-spacing:-.4px">105</div>
<div class="t col" style="left:403.65px;top:11.250px;width:33.300px;text-align:center;font-size:10.500px;line-height:12px;color:#a6a6a6;white-space:normal">06-<br>Oct</div>
<div class="t col" style="left:403.65px;top:68.750px;width:33.300px;text-align:center;font-size:14px;color:#333;letter-spacing:-.4px">105</div>
<div class="t col" style="left:436.95px;top:11.250px;width:33.300px;text-align:center;font-size:10.500px;line-height:12px;color:#a6a6a6;white-space:normal">07-<br>Oct</div>
<div class="t col" style="left:436.95px;top:68.750px;width:33.300px;text-align:center;font-size:14px;color:#333;letter-spacing:-.4px">106</div>
<div class="t col" style="left:470.25px;top:11.250px;width:33.300px;text-align:center;font-size:10.500px;line-height:12px;color:#a6a6a6;white-space:normal">08-<br>Oct</div>
<div class="t col" style="left:470.25px;top:68.750px;width:33.300px;text-align:center;font-size:14px;color:#333;letter-spacing:-.4px">106</div>
<div class="t col" style="left:503.55px;top:11.250px;width:33.300px;text-align:center;font-size:10.500px;line-height:12px;color:#a6a6a6;white-space:normal">09-<br>Oct</div>
<div class="t col" style="left:503.55px;top:68.750px;width:33.300px;text-align:center;font-size:14px;color:#333;letter-spacing:-.4px">106</div>
<div class="t col" style="left:536.85px;top:11.250px;width:33.300px;text-align:center;font-size:10.500px;line-height:12px;color:#a6a6a6;white-space:normal">10-<br>Oct</div>
<div class="t col" style="left:536.85px;top:68.750px;width:33.300px;text-align:center;font-size:14px;color:#333;letter-spacing:-.4px">106</div>
<div class="t col" style="left:570.15px;top:11.250px;width:33.300px;text-align:center;font-size:10.500px;line-height:12px;color:#a6a6a6;white-space:normal">11-<br>Oct</div>
<div class="t col" style="left:570.15px;top:68.750px;width:33.300px;text-align:center;font-size:14px;color:#333;letter-spacing:-.4px">106</div>
<div class="t col" style="left:603.45px;top:11.250px;width:33.300px;text-align:center;font-size:10.500px;line-height:12px;color:#a6a6a6;white-space:normal">12-<br>Oct</div>
<div class="t col" style="left:603.45px;top:68.750px;width:33.300px;text-align:center;font-size:14px;color:#333;letter-spacing:-.4px">106</div>
<div class="t col" style="left:636.75px;top:11.250px;width:33.300px;text-align:center;font-size:10.500px;line-height:12px;color:#a6a6a6;white-space:normal">13-<br>Oct</div>
<div class="t col" style="left:636.75px;top:68.750px;width:33.300px;text-align:center;font-size:14px;color:#333;letter-spacing:-.4px">106</div>
<div class="t col" style="left:670.05px;top:11.250px;width:33.300px;text-align:center;font-size:10.500px;line-height:12px;color:#a6a6a6;white-space:normal">14-<br>Oct</div>
<div class="t col" style="left:670.05px;top:68.750px;width:33.300px;text-align:center;font-size:14px;color:#333;letter-spacing:-.4px">106</div>
<div class="t col" style="left:703.35px;top:11.250px;width:33.300px;text-align:center;font-size:10.500px;line-height:12px;color:#a6a6a6;white-space:normal">15-<br>Oct</div>
<div class="t col" style="left:703.35px;top:68.750px;width:33.300px;text-align:center;font-size:14px;color:#333;letter-spacing:-.4px">106</div>
<div class="t col" style="left:736.65px;top:11.250px;width:33.300px;text-align:center;font-size:10.500px;line-height:12px;color:#a6a6a6;white-space:normal">16-<br>Oct</div>
<div class="t col" style="left:736.65px;top:68.750px;width:33.300px;text-align:center;font-size:14px;color:#333;letter-spacing:-.4px">106</div>
<div class="t col" style="left:769.95px;top:11.250px;width:33.300px;text-align:center;font-size:10.500px;line-height:12px;color:#a6a6a6;white-space:normal">17-<br>Oct</div>
<div class="t col" style="left:769.95px;top:68.750px;width:33.300px;text-align:center;font-size:14px;color:#333;letter-spacing:-.4px">106</div>
<div class="t col" style="left:803.25px;top:11.250px;width:33.300px;text-align:center;font-size:10.500px;line-height:12px;color:#a6a6a6;white-space:normal">18-<br>Oct</div>
<div class="t col" style="left:803.25px;top:68.750px;width:33.300px;text-align:center;font-size:14px;color:#333;letter-spacing:-.4px">106</div>
<div class="t col" style="left:836.55px;top:11.250px;width:33.300px;text-align:center;font-size:10.500px;line-height:12px;color:#a6a6a6;white-space:normal">19-<br>Oct</div>
<div class="t col" style="left:836.55px;top:68.750px;width:33.300px;text-align:center;font-size:14px;color:#333;letter-spacing:-.4px">106</div>
<div class="t col" style="left:869.85px;top:11.250px;width:33.300px;text-align:center;font-size:10.500px;line-height:12px;color:#a6a6a6;white-space:normal">20-<br>Oct</div>
<div class="t col" style="left:869.85px;top:68.750px;width:33.300px;text-align:center;font-size:14px;color:#333;letter-spacing:-.4px">106</div>
<div class="t col" style="left:903.15px;top:11.250px;width:33.300px;text-align:center;font-size:10.500px;line-height:12px;color:#a6a6a6;white-space:normal">21-<br>Oct</div>
<div class="t col" style="left:903.15px;top:68.750px;width:33.300px;text-align:center;font-size:14px;color:#333;letter-spacing:-.4px">106</div>
<div class="abs" style="left:0;top:0;width:186.3px;height:104px;background:#fafbfc;z-index:0"></div>
<div class="abs" style="left:186.3px;top:0;width:1px;height:98px;background:#e6e6e6"></div>
<div class="abs" style="left:186.3px;top:97.500px;width:760px;height:1px;background:#e6e6e6"></div>
<div class="abs" style="left:391.3px;top:98px;width:545px;height:6px;border-radius:3px;background:#e0e0e0"></div>
<div class="t" style="left:17.8px;top:13px;font-size:10.500px;color:#999;letter-spacing:-.15px">Modules</div>
<div class="abs" style="left:17.6px;top:50.700px;width:15.800px;height:15.500px;border-radius:4px;background:#69efa3"></div>
<div class="t" style="left:42.6px;top:51.500px;font-size:14px;color:#222;-webkit-text-stroke:.3px #222;letter-spacing:-.15px">Risks</div>
<div class="t" style="left:43.3px;top:72.950px;font-size:12px;color:#3d8565">By count</div>
</div>
<!--/TABLE-->
<!--MENUS-->
<!-- menus -->
<div class="abs" style="left:1052px;top:144px;width:262.300px;height:47.500px;border-radius:8px;background:#fff;box-shadow:0 3px 12px rgba(0,0,0,.12)"></div>
<div class="t" id="t_png" style="left:1068.300px;top:162px;font-size:11.500px;color:#444;letter-spacing:0px">.PNG</div>
<div class="abs" style="left:1324.300px;top:143.750px;width:261.500px;height:96.250px;border-radius:9px;background:#fff;box-shadow:0 4px 14px rgba(0,0,0,.13);overflow:hidden"><div class="abs" style="left:0;top:0;width:262px;height:48px;background:#f5f5f5"></div></div>
<svg style="left:1341px;top:157px" width="22" height="22" viewBox="0 0 22 22" fill="none" stroke="#2e7d5b" stroke-width="1.800" stroke-linecap="round" stroke-linejoin="round"><path d="M11 3V13.200M6.800 9.300 11 13.500 15.200 9.300M3.600 14.200V16.600Q3.600 18 5 18H17Q18.400 18 18.400 16.600V14.200"/></svg>
<div class="t" id="t_dl" style="left:1372.500px;top:161.500px;font-size:12.500px;color:#4a4a4a;letter-spacing:.03px">Download</div>
<svg style="left:1544.700px;top:155.100px" width="24" height="24" viewBox="0 0 24 24"><path fill="#2e7d5b" d="M10 6L8.590 7.410 13.170 12l-4.580 4.590L10 18l6-6z"/></svg>
<svg style="left:1340.300px;top:204.200px" width="23" height="23" viewBox="0 0 24 24" fill="none" stroke="#2e7d5b" stroke-width="1.750" stroke-linecap="round" stroke-linejoin="round">
  <path d="M7.500 18.700H5.500Q2.900 18.700 2.900 16.100V5.800Q2.900 3.200 5.500 3.200H17.500Q20.100 3.200 20.100 5.800V8"/>
  <path d="M14 8.300H16.800L17.300 10.300 18.700 11.100 20.700 10.500 22.100 12.900 20.600 14.300V15.900L22.100 17.300 20.700 19.700 18.700 19.100 17.300 19.900 16.800 21.900H14L13.500 19.900 12.100 19.100 10.100 19.700 8.700 17.300 10.200 15.900V14.300L8.700 12.900 10.100 10.500 12.100 11.100 13.500 10.300Z"/>
  <circle cx="15.400" cy="15.100" r="2.200"/>
</svg>
<div class="t" id="t_fc" style="left:1372.500px;top:209.700px;font-size:12.500px;color:#4a4a4a;letter-spacing:.2px">Format Configuration</div>
<!--/MENUS-->
</body>
</html>
